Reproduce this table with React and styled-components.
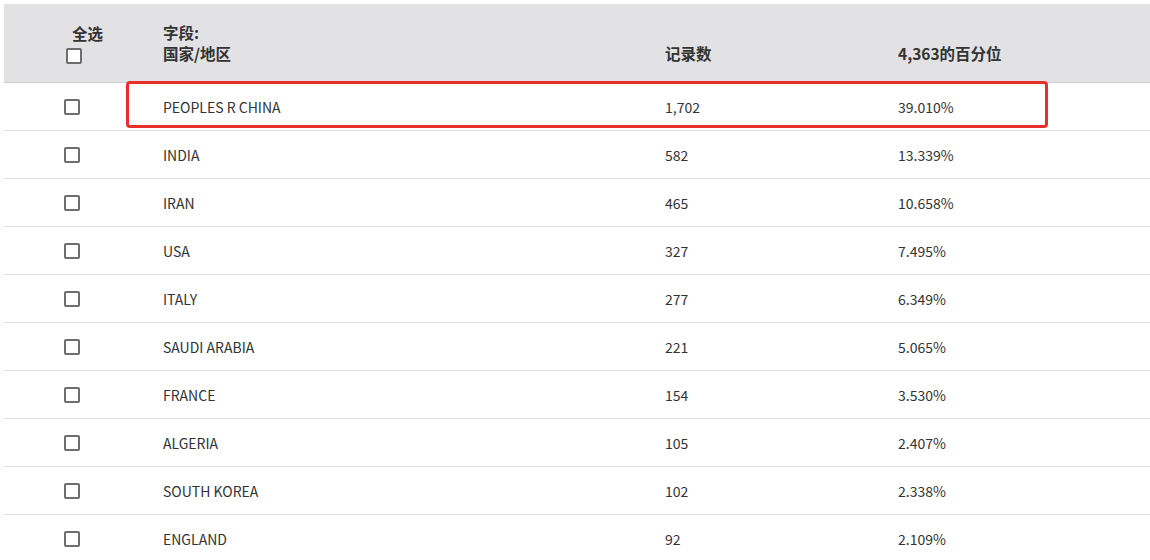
import styled, { createGlobalStyle } from 'styled-components';

const GlobalStyle = createGlobalStyle`
  body {
    margin: 0;
    background: #fff;
    font-family: "Noto Sans CJK SC", "Noto Sans", sans-serif;
    color: #333;
  }
`;

const columns = '159px 502px 233px 1fr';

const TableWrap = styled.div`
  position: relative;
  margin: 4px 0 0 4px;
`;

const HeaderRow = styled.div`
  display: grid;
  grid-template-columns: ${columns};
  align-items: end;
  background: #e2e2e4;
  border-bottom: 1px solid #cfcfd2;
  padding: 18px 0 18px;
  font-size: 15.5px;
  font-weight: 700;
  line-height: 21px;
  color: #333;
`;

const SelectAll = styled.div`
  display: flex;
  flex-direction: column;
  align-items: flex-start;
  padding-left: 68px;
  gap: 4px;

  span {
    line-height: 21px;
  }
`;

const HeaderCheck = styled.div`
  display: flex;
  margin-left: -6px;
`;

const HeaderCell = styled.div`
  white-space: pre-line;
`;

const Row = styled.div`
  display: grid;
  grid-template-columns: ${columns};
  align-items: center;
  height: 47px;
  border-bottom: 1px solid #e2e2e2;
  font-size: 14px;
  line-height: 20px;
  color: #333;
`;

const CheckCell = styled.div`
  padding-left: 60px;
  display: flex;
  align-items: center;
`;

const Box = styled.span`
  display: block;
  box-sizing: border-box;
  width: 16px;
  height: 16px;
  border: 2px solid #6d6d6d;
  border-radius: 2px;
  background: #fff;
`;

const Cell = styled.div`
  white-space: nowrap;
`;

const Highlight = styled.div`
  position: absolute;
  left: 122px;
  top: 77px;
  width: 922px;
  height: 47px;
  box-sizing: border-box;
  border: 3px solid #e8302a;
  border-radius: 4px;
  pointer-events: none;
`;

const rows = [
  ['PEOPLES R CHINA', '1,702', '39.010%'],
  ['INDIA', '582', '13.339%'],
  ['IRAN', '465', '10.658%'],
  ['USA', '327', '7.495%'],
  ['ITALY', '277', '6.349%'],
  ['SAUDI ARABIA', '221', '5.065%'],
  ['FRANCE', '154', '3.530%'],
  ['ALGERIA', '105', '2.407%'],
  ['SOUTH KOREA', '102', '2.338%'],
  ['ENGLAND', '92', '2.109%'],
];

export default function App() {
  return (
    <>
      <GlobalStyle />
      <TableWrap>
        <HeaderRow>
          <SelectAll>
            <span>全选</span>
            <HeaderCheck>
              <Box />
            </HeaderCheck>
          </SelectAll>
          <HeaderCell>{'字段:\n国家/地区'}</HeaderCell>
          <HeaderCell>记录数</HeaderCell>
          <HeaderCell>4,363的百分位</HeaderCell>
        </HeaderRow>
        {rows.map(([name, count, pct]) => (
          <Row key={name}>
            <CheckCell>
              <Box />
            </CheckCell>
            <Cell>{name}</Cell>
            <Cell>{count}</Cell>
            <Cell>{pct}</Cell>
          </Row>
        ))}
        <Highlight />
      </TableWrap>
    </>
  );
}
